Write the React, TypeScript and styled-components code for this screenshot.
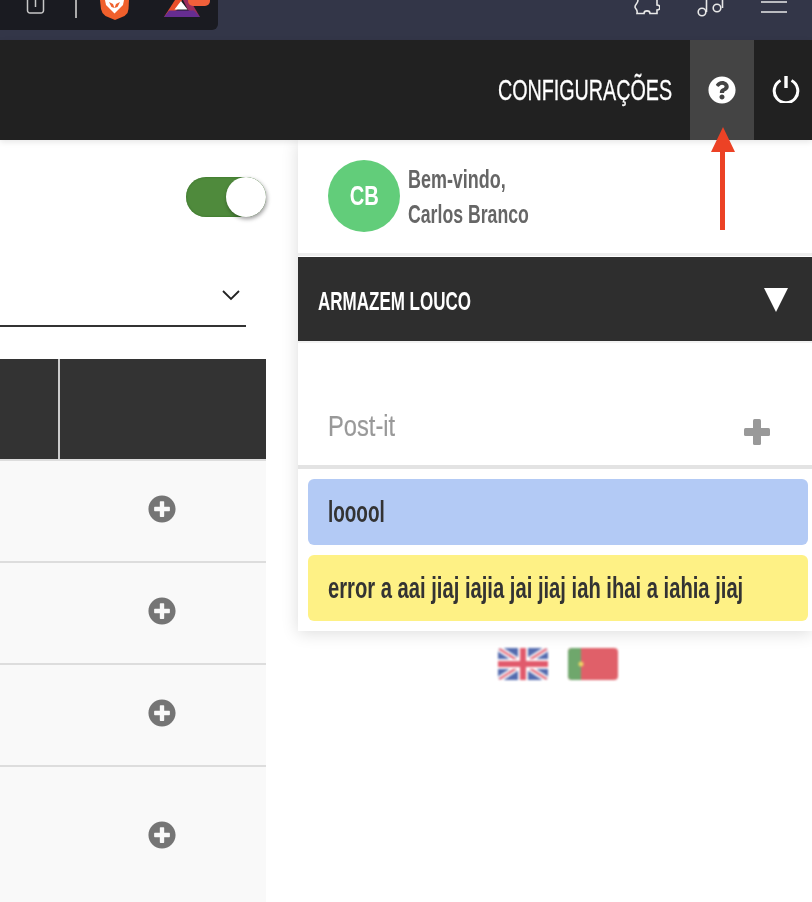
import styled, { createGlobalStyle } from "styled-components";
import { FaPlusCircle, FaQuestionCircle } from "react-icons/fa";

const Global = createGlobalStyle`
  html, body { margin: 0; padding: 0; background: #fff; }
  body { width: 812px; height: 902px; overflow: hidden; font-family: "Liberation Sans", Arial, sans-serif; }
`;

const Page = styled.div`
  width: 812px;
  height: 902px;
  overflow: hidden;
  position: relative;
`;

// the reference font is a very narrow one, none is installed, so squeeze the text
const Narrow = styled.span<{ $scale: number; $origin?: string; $stroke?: number }>`
  display: inline-block;
  white-space: nowrap;
  transform: scaleX(${(p) => p.$scale});
  transform-origin: ${(p) => p.$origin || "left"} center;
  -webkit-text-stroke: ${(p) => p.$stroke || 0}px currentColor;
`;

const BrowserBar = styled.div`
  height: 40px;
  background: #333648;
  display: flex;
  justify-content: space-between;
  align-items: flex-start;
`;

const UrlBox = styled.div`
  width: 218px;
  height: 30px;
  background: #1a1b21;
  border-radius: 0 0 6px 0;
  display: flex;
  align-items: flex-start;
  padding-left: 26px;
  box-sizing: border-box;
`;

const ToolIcon = styled.svg<{ $left?: number }>`
  display: block;
  flex: none;
  margin-left: ${(p) => p.$left || 0}px;
`;

const Divider = styled.div`
  width: 1.5px;
  height: 18px;
  background: #aaa;
  margin-left: 29px;
`;

const BrowserIcons = styled.div`
  display: flex;
  gap: 37px;
  padding-right: 25px;
  align-items: flex-start;
`;

const Header = styled.header`
  height: 100px;
  background: #212121;
  display: flex;
  justify-content: flex-end;
  align-items: stretch;
  position: relative;
  box-shadow: 0 2px 6px rgba(0, 0, 0, 0.1);
`;

const HeaderLabel = styled.div`
  color: #fff;
  font-size: 30px;
  display: flex;
  align-items: center;
  margin-right: 18px;
`;

const HelpButton = styled.div`
  width: 64px;
  background: #444;
  color: #fff;
  display: flex;
  align-items: center;
  justify-content: center;
  padding-bottom: 1px;
  box-sizing: border-box;
`;

const PowerButton = styled.div`
  width: 58px;
  padding: 0 0 2px 6px;
  box-sizing: border-box;
  display: flex;
  align-items: center;
  justify-content: center;
`;

const Content = styled.div`
  display: grid;
  grid-template-columns: 266px 514px;
  column-gap: 32px;
  width: 812px;
`;

const Left = styled.div`
  display: flex;
  flex-direction: column;
`;

const ToggleRow = styled.div`
  height: 115px;
  display: flex;
  justify-content: flex-end;
  padding-top: 37px;
  box-sizing: border-box;
`;

const Toggle = styled.div`
  width: 80px;
  height: 40px;
  border-radius: 20px;
  background: #4f8a3c;
  box-shadow: inset 0 0 2px #2d6a1e;
  position: relative;
`;

const Knob = styled.div`
  position: absolute;
  right: 0;
  top: 0;
  width: 40px;
  height: 40px;
  border-radius: 50%;
  background: #fff;
  box-shadow: 1px 2px 4px rgba(0, 0, 0, 0.4);
`;

const SelectRow = styled.div`
  width: 246px;
  height: 72px;
  border-bottom: 2px solid #333;
  display: flex;
  justify-content: flex-end;
  align-items: flex-start;
  padding: 35px 6px 0 0;
  box-sizing: border-box;
`;

const TableHead = styled.div`
  margin-top: 32px;
  height: 100px;
  background: #333;
  border-bottom: 2px solid #ddd;
  display: grid;
  grid-template-columns: 60px 1fr;
`;

const HeadCell = styled.div`
  border-right: 2px solid #ccc;
`;

const Row = styled.div<{ $h: number }>`
  height: ${(p) => p.$h}px;
  flex: none;
  background: #f9f9f9;
  border-bottom: 2px solid #ddd;
  box-sizing: border-box;
  display: flex;
  align-items: center;
  justify-content: flex-end;
  padding: 0 90px 5px 0;
  color: #757575;
`;

const Side = styled.aside`
  display: flex;
  flex-direction: column;
`;

const Panel = styled.div`
  background: #fff;
  box-shadow: 0 2px 16px rgba(0, 0, 0, 0.14);
  padding-bottom: 10px;
`;

const User = styled.div`
  height: 116px;
  display: flex;
  align-items: center;
  gap: 8px;
  padding: 0 0 2px 30px;
  border-bottom: 3px solid #eee;
  box-sizing: border-box;
  margin-bottom: 1px;
`;

const Avatar = styled.div`
  width: 72px;
  height: 72px;
  border-radius: 50%;
  background: #62cd7a;
  color: #fff;
  font-size: 28px;
  font-weight: bold;
  display: flex;
  align-items: center;
  justify-content: center;
`;

const Welcome = styled.div`
  color: #666;
  font-size: 26px;
  font-weight: bold;
  line-height: 35px;
  padding-top: 3px;
`;

const Store = styled.div`
  height: 86px;
  background: #2e2e2e;
  border-bottom: 2px solid #f2f2f2;
  display: flex;
  align-items: center;
  justify-content: space-between;
  padding: 4px 24px 0 20px;
  box-sizing: border-box;
  color: #fff;
  font-size: 26px;
  font-weight: bold;
`;

const Triangle = styled.div`
  width: 0;
  height: 0;
  margin-top: -2px;
  border-left: 12px solid transparent;
  border-right: 12px solid transparent;
  border-top: 24px solid #fff;
`;

const PostHead = styled.div`
  height: 126px;
  border-bottom: 4px solid #e3e3e3;
  box-sizing: border-box;
  display: flex;
  justify-content: space-between;
  align-items: flex-end;
  padding: 0 42px 20px 30px;
  color: #999;
  font-size: 30px;
`;

const PostTitle = styled(Narrow)`
  margin-bottom: 2px;
`;

const Notes = styled.div`
  display: flex;
  flex-direction: column;
  gap: 10px;
  padding: 10px 4px 0 10px;
`;

const Note = styled.div<{ $bg: string }>`
  height: 66px;
  border-radius: 6px;
  background: ${(p) => p.$bg};
  color: #333;
  font-size: 30px;
  font-weight: bold;
  display: flex;
  align-items: center;
  padding-left: 20px;
`;

const Flags = styled.div`
  display: flex;
  gap: 20px;
  padding: 17px 0 0 200px;
`;

const Flag = styled.svg`
  width: 50px;
  height: 32px;
  border-radius: 4px;
  display: block;
  opacity: 0.75;
  filter: blur(0.8px);
`;

const Arrow = styled.svg`
  position: absolute;
  left: 710px;
  top: 127px;
`;

export default function App() {
  return (
    <Page>
      <Global />
      <BrowserBar>
        <UrlBox>
          <ToolIcon width="20" height="15" viewBox="0 0 20 15" fill="none" stroke="#c8c8c8" strokeWidth="1.5">
            <path d="M1.500 0v10.500a2.500 2.500 0 0 0 2.500 2.500h11a2.500 2.500 0 0 0 2.500-2.500V0" />
            <path d="M9.500 0v7" />
          </ToolIcon>
          <Divider />
          <ToolIcon $left={23} width="30" height="21" viewBox="0 0 30 21">
            <path d="M0 0h29l-.500 9-1 4-3 3-9.500 4-9.500-4-3-3-1.500-4z" fill="#f0602c" />
            <path d="M5 0h19l-1 5-4 4-4.500 4.500L10 9 6 5z" fill="#fff" />
            <path d="M9 2l4 2 1.500 4-3-1zM20 2l-4 2-1.500 4 3-1z" fill="#f0602c" />
          </ToolIcon>
          <ToolIcon $left={34} width="46" height="18" viewBox="0 0 46 18">
            <path d="M0 17L11 0h7l-5 10z" fill="#e94e2a" />
            <path d="M36 17L26 0h-7l5 10z" fill="#9b2d5e" />
            <path d="M17 1l6.500 8.500h-13z" fill="#fff" />
            <path d="M5 10.500h25l6 6.500H0z" fill="#662d91" />
            <path d="M24 0h22v1a5 5 0 0 1-5 5H29a5 5 0 0 1-5-5z" fill="#f0603a" />
          </ToolIcon>
        </UrlBox>
        <BrowserIcons>
          <ToolIcon width="26" height="16" viewBox="0 0 26 16" fill="none" stroke="#e8e8e8" strokeWidth="1.600">
            <path d="M4 0C4 4 1 4 1 7c0 2 3 2 2 6.500h7c0-3.500 6-3.500 6 0h7V10c4 0 4-5 0-5V0" />
          </ToolIcon>
          <ToolIcon width="27" height="17" viewBox="0 0 27 17" fill="none" stroke="#e8e8e8" strokeWidth="1.600">
            <circle cx="5" cy="12" r="3.800" />
            <path d="M9.500 12V0" />
            <circle cx="20" cy="8" r="3.800" />
            <path d="M25.500 8V0" />
          </ToolIcon>
          <ToolIcon width="26" height="14" viewBox="0 0 26 14" stroke="#e8e8e8" strokeWidth="1.600">
            <path d="M0 2h26M0 12h26" />
          </ToolIcon>
        </BrowserIcons>
      </BrowserBar>
      <Header>
        <HeaderLabel>
          <Narrow $scale={0.657} $origin="right" $stroke={0.3}>CONFIGURAÇÕES</Narrow>
        </HeaderLabel>
        <HelpButton>
          <FaQuestionCircle size={28} />
        </HelpButton>
        <PowerButton>
          <svg width="28" height="28" viewBox="0 0 28 28" fill="none" stroke="#fff" strokeWidth="3">
            <path d="M8.500 5.500a11.800 11.800 0 1 0 11 0" />
            <path d="M14 1v12" strokeWidth="3.400" />
          </svg>
        </PowerButton>
      </Header>
      <Content>
        <Left>
          <ToggleRow>
            <Toggle>
              <Knob />
            </Toggle>
          </ToggleRow>
          <SelectRow>
            <svg width="18" height="12" viewBox="0 0 18 12" fill="none" stroke="#222" strokeWidth="1.800">
              <path d="M1 1l8 8 8-8" />
            </svg>
          </SelectRow>
          <TableHead>
            <HeadCell />
            <div />
          </TableHead>
          <Row $h={102}><FaPlusCircle size={28} /></Row>
          <Row $h={102}><FaPlusCircle size={28} /></Row>
          <Row $h={102}><FaPlusCircle size={28} /></Row>
          <Row $h={143}><FaPlusCircle size={28} /></Row>
        </Left>
        <Side>
          <Panel>
            <User>
              <Avatar>
                <Narrow $scale={0.72} $origin="center">CB</Narrow>
              </Avatar>
              <Welcome>
                <Narrow $scale={0.69}>Bem-vindo,</Narrow>
                <br />
                <Narrow $scale={0.68}>Carlos Branco</Narrow>
              </Welcome>
            </User>
            <Store>
              <Narrow $scale={0.654}>ARMAZEM LOUCO</Narrow>
              <Triangle />
            </Store>
            <PostHead>
              <PostTitle $scale={0.79} $stroke={0.2}>Post-it</PostTitle>
              <svg width="26" height="26" viewBox="0 0 26 26" fill="#999">
                <rect x="9" width="8" height="26" rx="1.500" />
                <rect y="9" width="26" height="8" rx="1.500" />
              </svg>
            </PostHead>
            <Notes>
              <Note $bg="#b3caf5">
                <Narrow $scale={0.63}>looool</Narrow>
              </Note>
              <Note $bg="#fef185">
                <Narrow $scale={0.673}>error a aai jiaj iajia jai jiaj iah ihai a iahia jiaj</Narrow>
              </Note>
            </Notes>
          </Panel>
          <Flags>
            <Flag viewBox="0 0 50 32">
              <rect width="50" height="32" fill="#1a3a94" />
              <path d="M0 0l50 32M50 0L0 32" stroke="#fff" strokeWidth="6" />
              <path d="M0 0l50 32M50 0L0 32" stroke="#d8243c" strokeWidth="2" />
              <path d="M25 0v32M0 16h50" stroke="#fff" strokeWidth="10" />
              <path d="M25 0v32M0 16h50" stroke="#d8243c" strokeWidth="6" />
            </Flag>
            <Flag viewBox="0 0 50 32">
              <rect width="50" height="32" fill="#d62c38" />
              <rect width="13" height="32" fill="#3f8a3c" />
              <circle cx="13" cy="16" r="2.500" fill="#e8c632" />
            </Flag>
          </Flags>
        </Side>
      </Content>
      <Arrow width="26" height="103" viewBox="0 0 26 103">
        <path d="M13 0l12 25H15v78h-5V25H1z" fill="#ec4225" />
      </Arrow>
    </Page>
  );
}
